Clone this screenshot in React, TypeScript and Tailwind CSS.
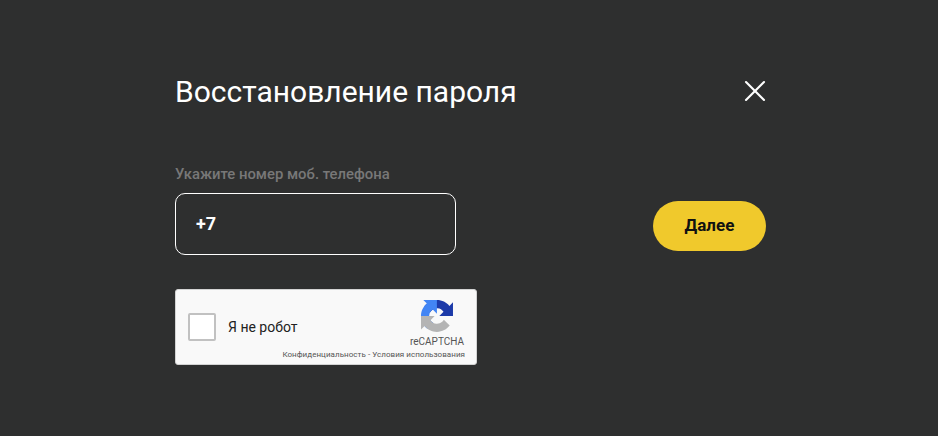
import { X } from 'lucide-react';

function RecaptchaLogo() {
  return (
    <svg viewBox="0 0 64 64" className="w-8 h-8">
      <path fill="#1c3aa9" d="M64 31.955l-.033-1.37V4.687l-7.16 7.16C50.948 4.674 42.033.093 32.05.093 21.66.093 12.429 5.05 6.593 12.73l11.736 11.86a15.5 15.5 0 014.75-5.33c2.05-1.6 4.952-2.907 8.973-2.907.486 0 .86.057 1.136.163 4.982.393 9.3 3.143 11.842 7.135l-8.307 8.307c10.52-.04 22.405-.066 27.5.003" />
      <path fill="#4285f4" d="M31.862 0l-1.37.033H4.594l7.16 7.16C4.58 13.052 0 21.967 0 31.95c0 10.39 4.957 19.62 12.637 25.457l11.86-11.736a15.5 15.5 0 01-5.33-4.75c-1.6-2.05-2.907-4.952-2.907-8.973 0-.486.057-.86.163-1.136.393-4.982 3.143-9.3 7.135-11.842l8.307 8.307c-.04-10.52-.066-22.405.003-27.5" />
      <path fill="#b4b4b4" d="M.001 31.953l.033 1.37v25.9l7.16-7.16c5.86 7.173 14.775 11.753 24.76 11.753 10.39 0 19.62-4.957 25.457-12.637L45.675 39.32a15.5 15.5 0 01-4.75 5.33c-2.05 1.6-4.952 2.907-8.973 2.907-.486 0-.86-.057-1.136-.163-4.982-.393-9.3-3.143-11.842-7.135l8.307-8.307c-10.52.04-22.405.066-27.5-.003" />
    </svg>
  );
}

export default function App() {
  return (
    <div className="h-[436px] bg-[#2e2f2f] font-['Roboto',sans-serif] overflow-hidden pl-[175px] pr-[172px] pt-[72px]">
      <div className="flex items-center justify-between h-10">
        <h1 className="text-[30px] leading-10 text-white">Восстановление пароля</h1>
        <button className="text-white -mr-[7px] -mt-[3px]">
          <X size={36} strokeWidth={1.4} />
        </button>
      </div>

      <p className="mt-[52px] text-[14.85px] leading-5 font-medium text-[#787878]">Укажите номер моб. телефона</p>

      <div className="mt-[9px] flex items-center justify-between">
        <div className="w-[281px] h-[62px] border border-white rounded-[10px] flex items-center pl-5">
          <span className="text-lg font-bold text-white">+7</span>
        </div>
        <button className="w-[113px] h-[50px] mt-1 rounded-full bg-[#f0c92c] text-[17px] font-bold text-[#111]">Далее</button>
      </div>

      <div className="mt-[34px] w-[302px] h-[76px] bg-[#f9f9f9] border border-[#d3d3d3] rounded-[3px] flex relative">
        <div className="flex items-center pl-3 gap-3 h-full">
          <div className="w-7 h-7 bg-white border-2 border-[#c1c1c1] rounded-[2px]" />
          <span className="text-sm text-[#222]">Я не робот</span>
        </div>
        <div className="absolute right-3 top-[10px] flex flex-col items-center">
          <RecaptchaLogo />
          <span className="mt-[3px] text-[10px] leading-[14px] text-[#555]">reCAPTCHA</span>
        </div>
        <div className="absolute right-[11px] bottom-[4px] text-[8px] tracking-[0.05px] leading-[11px] text-[#555] whitespace-nowrap">Конфиденциальность - Условия использования</div>
      </div>
    </div>
  );
}
